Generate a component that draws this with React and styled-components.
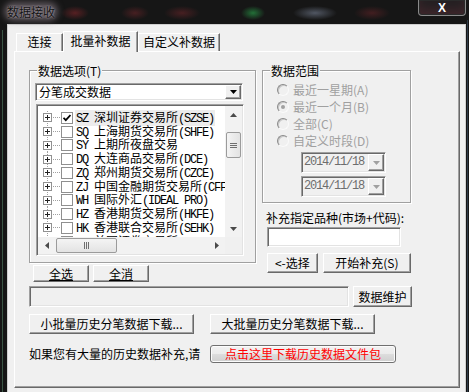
import React from 'react'
import styled, { createGlobalStyle, css } from 'styled-components'

const UI_FONT = `"Noto Sans CJK SC", "Liberation Sans", sans-serif`
const MONO = `"Liberation Mono", "Noto Sans CJK SC", monospace`

const GlobalStyle = createGlobalStyle`
  body { margin: 0; background: #161616; }
  * { box-sizing: border-box; }
`

const raised = css`
  border: 1px solid;
  border-color: #fff #696969 #696969 #fff;
  box-shadow: inset -1px -1px 0 #a0a0a0;
  background: #f0f0f0;
`
const sunken = css`
  border: 1px solid;
  border-color: #a0a0a0 #fff #fff #a0a0a0;
  padding: 1px;
  box-shadow: inset 1px 1px 0 #696969, inset -1px -1px 0 #e3e3e3;
`

const Page = styled.div`
  width: 469px;
  height: 392px;
  overflow: hidden;
  font: 12px/14px ${UI_FONT};
  background:
    radial-gradient(ellipse 14px 7px at 75px 13px, rgba(140, 40, 45, 0.55), transparent),
    radial-gradient(ellipse 14px 7px at 135px 13px, rgba(120, 40, 45, 0.5), transparent),
    radial-gradient(ellipse 18px 7px at 182px 13px, rgba(120, 40, 45, 0.5), transparent),
    radial-gradient(ellipse 12px 7px at 253px 13px, rgba(40, 150, 70, 0.7), transparent),
    radial-gradient(ellipse 22px 7px at 315px 13px, rgba(120, 130, 150, 0.6), transparent),
    radial-gradient(ellipse 18px 7px at 372px 13px, rgba(120, 40, 45, 0.45), transparent),
    linear-gradient(#3b5646, #3b5646) 2px 30px / 1px 362px no-repeat,
    linear-gradient(#2d3a48, #2d3a48) 467px 20px / 1px 372px no-repeat,
    #161616;
`

const TitleBar = styled.div`
  height: 24px;
  display: flex;
  justify-content: space-between;
  align-items: flex-start;
  padding-left: 7px;
`

const Caption = styled.div`
  margin-top: 5px;
  font-size: 12px;
  line-height: 13px;
  color: #121212;
  border-radius: 6px;
  background: rgba(120, 110, 118, 0.7);
  box-shadow: 0 0 6px 3px rgba(120, 110, 118, 0.7);
  text-shadow: 0 0 2px rgba(200, 190, 200, 0.9);
`

const CloseBtn = styled.div`
  width: 48px;
  height: 16px;
  margin-right: 3px;
  border: 1px solid #8a8a8a;
  border-top: none;
  border-radius: 0 0 4px 4px;
  box-shadow: inset 0 0 0 1px #2a2a2a, inset 0 -6px 10px rgba(110, 50, 60, 0.35);
  background: #242022;
  display: flex;
  justify-content: center;
  align-items: center;
  color: #fff;
  font: bold 12px/1 "Liberation Sans", sans-serif;
`

const Client = styled.div`
  margin-left: 7px;
  width: 459px;
  height: 368px;
  background: #f0f0f0;
  border: 1px solid #cfcfcf;
  border-bottom: none;
  padding: 6px 6px 0 6px;
`

const TabStrip = styled.div`
  display: flex;
  align-items: flex-end;
  height: 20px;
  padding-left: 2px;
`

const Tab = styled.div`
  position: relative;
  width: ${p => p.$w}px;
  height: ${p => (p.$active ? 21 : 18)}px;
  margin-bottom: ${p => (p.$active ? -1 : 0)}px;
  z-index: ${p => (p.$active ? 1 : 0)};
  background: #f0f0f0;
  border: 1px solid;
  border-bottom: none;
  border-color: #fff #696969 transparent #fff;
  box-shadow: inset -1px 0 0 #a0a0a0;
  padding-top: ${p => (p.$active ? 2 : 1)}px;
  text-align: center;
  font-size: 12px;
  line-height: 14px;
`

const Panel = styled.div`
  width: 446px;
  height: 337px;
  border: 1px solid;
  border-color: #fff #696969 #696969 #fff;
  box-shadow: inset -1px -1px 0 #a0a0a0;
  padding: 18px 0 0 14px;
`

const Upper = styled.div`
  display: flex;
  gap: 6px;
  height: 212px;
`

const Column = styled.div`
  width: ${p => p.$w}px;
  display: flex;
  flex-direction: column;
`

const Group = styled.div`
  position: relative;
  width: 100%;
  height: ${p => p.$h}px;
  border: 1px solid #a0a0a0;
  box-shadow: inset 1px 1px 0 #fff, 1px 1px 0 #fff;
  padding: ${p => p.$pad};
`

const Legend = styled.span`
  position: absolute;
  top: -7px;
  left: 7px;
  padding: 0 1px;
  background: #f0f0f0;
  line-height: 13px;
  color: #000;
`

const Combo = styled.div`
  ${sunken}
  width: 208px;
  height: 18px;
  background: #fff;
  display: flex;
  align-items: center;
  justify-content: space-between;
  padding-left: 3px;
`

const DropBtn = styled.span`
  ${raised}
  width: 16px;
  height: ${p => p.$h || 14}px;
  flex: none;
  display: flex;
  align-items: center;
  justify-content: center;
`

const Tree = styled.div`
  ${sunken}
  width: 208px;
  height: 152px;
  margin: 3px 0 0 1px;
  background: #fff;
  display: grid;
  grid-template-columns: 187px 17px;
  grid-template-rows: 131px 17px;
`

const Viewport = styled.div`
  overflow: hidden;
  padding-top: 5px;
`

const Row = styled.div`
  height: 13.75px;
  display: flex;
  align-items: center;
  white-space: nowrap;
  padding-left: 5px;
  background: linear-gradient(to bottom, #a0a0a0 1px, transparent 1px) 9px 0 / 1px 2px repeat-y;
  & > * {
    flex-shrink: 0;
  }
`

const Connector = styled.span`
  width: 7px;
  margin-left: 1px;
  border-top: 1px dotted #a0a0a0;
`

const Check = styled.span`
  width: 12px;
  height: 12px;
  margin-left: 1px;
  border: 1px solid #8f8f8f;
  background: #fff;
  display: flex;
  align-items: center;
  justify-content: center;
`

const Label = styled.span`
  margin-left: 2px;
  padding: 0 1px;
  background: ${p => (p.$sel ? '#ececec' : 'transparent')};
  line-height: 13px;
`

const Code = styled.span`
  font: 12px/13px ${MONO};
  letter-spacing: -1.2px;
`

const VScroll = styled.div`
  background: #f2f2f2;
  display: flex;
  flex-direction: column;
`

const HScroll = styled.div`
  background: #f2f2f2;
  display: flex;
`

const ScrollBtn = styled.span`
  width: 17px;
  height: 17px;
  flex: none;
  display: flex;
  align-items: center;
  justify-content: center;
`

const Thumb = styled.span`
  flex: none;
  border: 1px solid #9b9b9b;
  border-radius: 2px;
  display: flex;
  align-items: center;
  justify-content: center;
  ${p =>
    p.$vertical
      ? css`
          width: 15px;
          height: 26px;
          margin: 9px 0 0 1px;
          background: linear-gradient(90deg, #f4f4f4, #e3e3e3);
        `
      : css`
          width: 61px;
          height: 15px;
          margin: 1px 0 0 1px;
          background: linear-gradient(#f4f4f4, #e3e3e3);
        `}
`

const Spacer = styled.span`
  flex: 1;
`

const Corner = styled.div`
  background: #f0f0f0;
`

const ButtonRow = styled.div`
  display: flex;
  gap: ${p => p.$gap || 4}px;
  margin: ${p => p.$m};
  align-items: center;
`

const Button = styled.button`
  ${raised}
  width: ${p => p.$w}px;
  height: ${p => p.$h || 20}px;
  padding: 0;
  font: 12px/14px ${UI_FONT};
  color: #000;
  text-decoration: ${p => (p.$u ? 'underline' : 'none')};
`

const RadioList = styled.div`
  display: flex;
  flex-direction: column;
`

const RadioRow = styled.div`
  height: 17px;
  display: flex;
  align-items: center;
  gap: 4px;
  color: #a0a0a0;
`

const Radio = styled.span`
  width: 12px;
  height: 12px;
  border-radius: 50%;
  border: 1px solid;
  border-color: #8a8a8a #fafafa #fafafa #8a8a8a;
  box-shadow: inset 1px 1px 0 #c8c8c8;
  background: #f0f0f0;
  display: flex;
  align-items: center;
  justify-content: center;
  &::after {
    content: '';
    width: 4px;
    height: 4px;
    border-radius: 50%;
    background: ${p => (p.$on ? '#a0a0a0' : 'transparent')};
  }
`

const DateStack = styled.div`
  display: flex;
  flex-direction: column;
  gap: 3px;
  margin: 3px 0 0 24px;
`

const DateBox = styled.div`
  ${sunken}
  width: 85px;
  height: 21px;
  background: #f0f0f0;
  display: flex;
  align-items: center;
  justify-content: space-between;
  padding-left: 2px;
  color: #6d6d6d;
`

const FieldLabel = styled.div`
  margin: 9px 0 0 4px;
  line-height: 12px;
  white-space: nowrap;
`

const TextInput = styled.div`
  ${sunken}
  width: 134px;
  height: 20px;
  margin: 3px 0 0 5px;
  background: #fff;
`

const StatusRow = styled.div`
  display: flex;
  gap: 4px;
  margin-top: 4px;
`

const StatusField = styled.div`
  ${sunken}
  width: 320px;
  height: 21px;
  background: #f0f0f0;
`

const NoteRow = styled.div`
  display: flex;
  align-items: center;
  margin-top: 11px;
`

const Note = styled.span`
  width: 181px;
  white-space: nowrap;
`

const LinkButton = styled.button`
  width: 186px;
  height: 18px;
  padding: 0;
  border: 1px solid #707070;
  border-radius: 3px;
  background: linear-gradient(#f2f2f2 0%, #ebebeb 50%, #dddddd 51%, #cfcfcf 100%);
  box-shadow: inset 0 0 0 1px #fcfcfc;
  color: #ff0000;
  font: 12px/14px ${UI_FONT};
`

const Tri = ({ dir = 'down', color = '#000' }) => {
  const pts = {
    down: '0,0 7,0 3.5,4',
    up: '0,4 7,4 3.5,0',
    left: '4,0 4,7 0,3.5',
    right: '0,0 0,7 4,3.5',
  }[dir]
  const horiz = dir === 'left' || dir === 'right'
  return (
    <svg width={horiz ? 4 : 7} height={horiz ? 7 : 4} viewBox={horiz ? '0 0 4 7' : '0 0 7 4'}>
      <polygon points={pts} fill={color} />
    </svg>
  )
}

const PlusBox = () => (
  <svg width="9" height="9" viewBox="0 0 9 9">
    <rect x="0.5" y="0.5" width="8" height="8" fill="#fff" stroke="#919191" />
    <path d="M2 4.5h5M4.5 2v5" stroke="#222" />
  </svg>
)

const CheckMark = () => (
  <svg width="8" height="8" viewBox="0 0 8 8">
    <path d="M0.5 3.8l2.3 2.4L7.5 1" fill="none" stroke="#000" strokeWidth="1.8" />
  </svg>
)

const Grip = ({ vertical }) => (
  <svg width={vertical ? 7 : 5} height={vertical ? 5 : 7}>
    {[0, 2, 4].map(o =>
      vertical ? (
        <rect key={o} x="0" y={o} width="7" height="1" fill="#6f6f6f" />
      ) : (
        <rect key={o} x={o} y="0" width="1" height="7" fill="#6f6f6f" />
      )
    )}
  </svg>
)

const markets = [
  ['SZ', '深圳证券交易所', 'SZSE', true],
  ['SQ', '上海期货交易所', 'SHFE'],
  ['SY', '上期所夜盘交易'],
  ['DQ', '大连商品交易所', 'DCE'],
  ['ZQ', '郑州期货交易所', 'CZCE'],
  ['ZJ', '中国金融期货交易所', 'CFFEX'],
  ['WH', '国际外汇', 'IDEAL PRO'],
  ['HZ', '香港期货交易所', 'HKFE'],
  ['HK', '香港联合交易所', 'SEHK'],
  ['MG', '美国证券交易所', 'NYSE'],
]

const ranges = [
  ['最近一星期', 'A'],
  ['最近一个月', 'B', true],
  ['全部', 'C'],
  ['自定义时段', 'D'],
]

export default function App() {
  return (
    <>
      <GlobalStyle />
      <Page>
        <TitleBar>
          <Caption>数据接收</Caption>
          <CloseBtn>X</CloseBtn>
        </TitleBar>
        <Client>
          <TabStrip>
            <Tab $w={47}>连接</Tab>
            <Tab $w={75} $active>批量补数据</Tab>
            <Tab $w={82}>自定义补数据</Tab>
          </TabStrip>
          <Panel>
            <Upper>
              <Column $w={227}>
                <Group $h={193} $pad="12px 0 0 5px">
                  <Legend>数据选项(T)</Legend>
                  <Combo>
                    <span>分笔成交数据</span>
                    <DropBtn>
                      <Tri />
                    </DropBtn>
                  </Combo>
                  <Tree>
                    <Viewport>
                      {markets.map(([code, name, ex, on], i) => (
                        <Row key={code}>
                          <PlusBox />
                          <Connector />
                          <Check>{on && <CheckMark />}</Check>
                          <Label $sel={i === 0}>
                            <Code>{code} </Code>
                            {name}
                            {ex && <Code>({ex})</Code>}
                          </Label>
                        </Row>
                      ))}
                    </Viewport>
                    <VScroll>
                      <ScrollBtn>
                        <Tri dir="up" color="#4a4a4a" />
                      </ScrollBtn>
                      <Thumb $vertical>
                        <Grip vertical />
                      </Thumb>
                      <Spacer />
                      <ScrollBtn>
                        <Tri dir="down" color="#4a4a4a" />
                      </ScrollBtn>
                    </VScroll>
                    <HScroll>
                      <ScrollBtn>
                        <Tri dir="left" color="#4a4a4a" />
                      </ScrollBtn>
                      <Thumb>
                        <Grip />
                      </Thumb>
                      <Spacer />
                      <ScrollBtn>
                        <Tri dir="right" color="#4a4a4a" />
                      </ScrollBtn>
                    </HScroll>
                    <Corner />
                  </Tree>
                </Group>
                <ButtonRow $m="2px 0 0 4px">
                  <Button $w={56} $h={17} $u>全选</Button>
                  <Button $w={56} $h={17} $u>全消</Button>
                </ButtonRow>
              </Column>
              <Column $w={149}>
                <Group $h={133} $pad="10px 0 0 14px">
                  <Legend>数据范围</Legend>
                  <RadioList>
                    {ranges.map(([text, key, on]) => (
                      <RadioRow key={key}>
                        <Radio $on={on} />
                        <span>
                          {text}({key})
                        </span>
                      </RadioRow>
                    ))}
                  </RadioList>
                  <DateStack>
                    {[0, 1].map(i => (
                      <DateBox key={i}>
                        <Code>2014/11/18</Code>
                        <DropBtn $h={17}>
                          <Tri color="#a0a0a0" />
                        </DropBtn>
                      </DateBox>
                    ))}
                  </DateStack>
                </Group>
                <FieldLabel>补充指定品种(市场+代码):</FieldLabel>
                <TextInput />
                <ButtonRow $m="6px 0 0 5px" $gap={5}>
                  <Button $w={51}>&lt;-选择</Button>
                  <Button $w={89}>开始补充(S)</Button>
                </ButtonRow>
              </Column>
            </Upper>
            <StatusRow>
              <StatusField />
              <Button $w={59} $h={21}>数据维护</Button>
            </StatusRow>
            <ButtonRow $m="7px 0 0 0" $gap={16}>
              <Button $w={165}>小批量历史分笔数据下载...</Button>
              <Button $w={165}>大批量历史分笔数据下载...</Button>
            </ButtonRow>
            <NoteRow>
              <Note>如果您有大量的历史数据补充,请</Note>
              <LinkButton>点击这里下载历史数据文件包</LinkButton>
            </NoteRow>
          </Panel>
        </Client>
      </Page>
    </>
  )
}
